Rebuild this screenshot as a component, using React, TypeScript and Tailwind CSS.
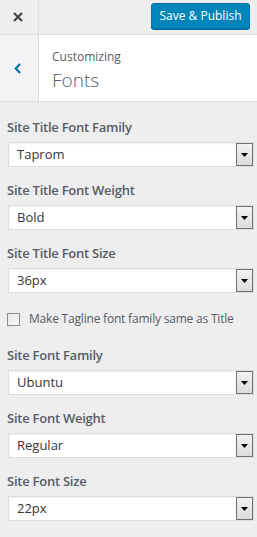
import React from "react";

function Select({ value }: { value: string }) {
  return (
    <div className="flex h-[25px] w-[246px] border border-[#dddddd] bg-white shadow-[inset_0_1px_2px_rgba(0,0,0,0.07)]">
      <div className="flex-1 pl-[8px] flex items-center text-[13px] text-[#32373c] leading-none">
        {value}
      </div>
      <div className="w-[17px] h-full border border-[#707070] bg-gradient-to-b from-[#f2f2f2] to-[#dcdcdc] flex items-center justify-center">
        <svg width="7" height="4" viewBox="0 0 7 4">
          <polygon points="0,0 7,0 3.5,4" fill="#000" />
        </svg>
      </div>
    </div>
  );
}

function Label({ children }: { children: React.ReactNode }) {
  return (
    <div className="h-[20px] leading-[20px] text-[13px] font-semibold tracking-[-0.25px] text-[#555d66] -ml-px mb-[5px]">
      {children}
    </div>
  );
}

function Control({ label, value }: { label: string; value: string }) {
  return (
    <div className="mb-[13px]">
      <Label>{label}</Label>
      <Select value={value} />
    </div>
  );
}

export default function App() {
  return (
    <div className="w-[257px] h-[537px] bg-[#eeeeee] overflow-hidden font-['Open_Sans',sans-serif]">
      <div className="flex h-[35px] border-b border-[#dddddd] bg-[#eeeeee]">
        <div className="w-[39px] border-r border-[#dddddd] flex items-center justify-center pr-[2px]">
          <svg width="10" height="10" viewBox="0 0 10 10">
            <path d="M1 1 L9 9 M9 1 L1 9" stroke="#444" strokeWidth="2.2" strokeLinecap="butt" />
          </svg>
        </div>
        <div className="flex-1 flex justify-end pr-[7px] pt-[3px]">
          <div className="h-[26px] w-[99px] rounded-[3px] bg-[#0085ba] border border-[#0073aa] shadow-[0_1px_0_#006799] flex items-center justify-center text-white text-[12px] leading-none">
            Save &amp; Publish
          </div>
        </div>
      </div>
      <div className="flex h-[67px] border-b border-[#dddddd] bg-white">
        <div className="w-[39px] border-r border-[#dddddd] bg-[#f3f3f5] flex items-center justify-center pr-[4px]">
          <svg width="7" height="11" viewBox="0 0 7 11">
            <path d="M6 1 L1.8 5.5 L6 10" stroke="#0073aa" strokeWidth="2.2" fill="none" />
          </svg>
        </div>
        <div className="pl-[13px] pt-[12px] flex flex-col">
          <div className="text-[12px] leading-[20px] text-[#555d66]">Customizing</div>
          <div className="text-[19px] leading-[27px] font-light text-[#555d66]">Fonts</div>
        </div>
      </div>
      <div className="pl-[8px] pt-[15px]">
        <Control label="Site Title Font Family" value="Taprom" />
        <Control label="Site Title Font Weight" value="Bold" />
        <div>
          <Label>Site Title Font Size</Label>
          <Select value="36px" />
        </div>
        <div className="mt-[12px] mb-[12px] h-[28px] flex items-center -ml-px">
          <div className="w-[13px] h-[13px] border border-[#8c8c8c] bg-gradient-to-br from-[#e6e6e6] to-[#fafafa]" />
          <div className="ml-[9px] text-[12px] tracking-[-0.2px] text-[#555d66] leading-none">
            Make Tagline font family same as Title
          </div>
        </div>
        <Control label="Site Font Family" value="Ubuntu" />
        <Control label="Site Font Weight" value="Regular" />
        <Control label="Site Font Size" value="22px" />
      </div>
    </div>
  );
}
